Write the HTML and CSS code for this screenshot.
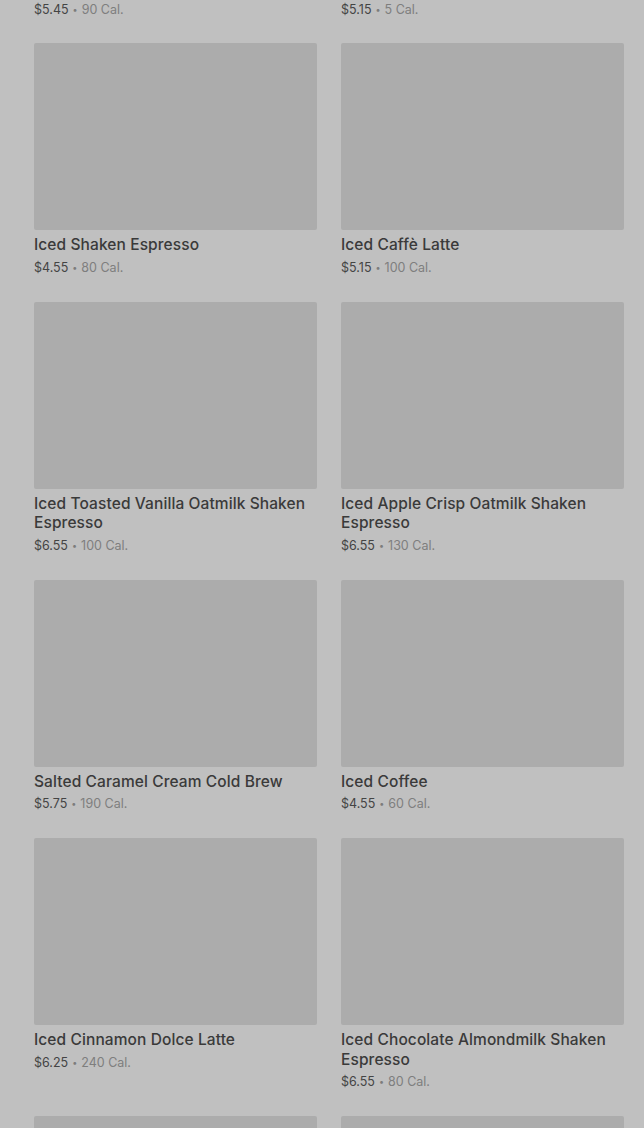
FILE: index.html
```html
<!DOCTYPE html>
<html>
<head>
<meta charset="utf-8">
<link rel="stylesheet" href="styles.css">
</head>
<body>
<main class="menu">
  <div class="grid">
    <div class="card partial"><p class="meta"><span class="price">$5.45</span><span class="dot">•</span><span class="cal">90 Cal.</span></p></div>
    <div class="card partial"><p class="meta"><span class="price">$5.15</span><span class="dot">•</span><span class="cal">5 Cal.</span></p></div>

    <div class="card"><div class="thumb"></div><h3 class="name">Iced Shaken Espresso</h3><p class="meta"><span class="price">$4.55</span><span class="dot">•</span><span class="cal">80 Cal.</span></p></div>
    <div class="card"><div class="thumb"></div><h3 class="name">Iced Caffè Latte</h3><p class="meta"><span class="price">$5.15</span><span class="dot">•</span><span class="cal">100 Cal.</span></p></div>

    <div class="card"><div class="thumb"></div><h3 class="name">Iced Toasted Vanilla Oatmilk Shaken Espresso</h3><p class="meta"><span class="price">$6.55</span><span class="dot">•</span><span class="cal">100 Cal.</span></p></div>
    <div class="card"><div class="thumb"></div><h3 class="name">Iced Apple Crisp Oatmilk Shaken Espresso</h3><p class="meta"><span class="price">$6.55</span><span class="dot">•</span><span class="cal">130 Cal.</span></p></div>

    <div class="card"><div class="thumb"></div><h3 class="name">Salted Caramel Cream Cold Brew</h3><p class="meta"><span class="price">$5.75</span><span class="dot">•</span><span class="cal">190 Cal.</span></p></div>
    <div class="card"><div class="thumb"></div><h3 class="name">Iced Coffee</h3><p class="meta"><span class="price">$4.55</span><span class="dot">•</span><span class="cal">60 Cal.</span></p></div>

    <div class="card"><div class="thumb"></div><h3 class="name">Iced Cinnamon Dolce Latte</h3><p class="meta"><span class="price">$6.25</span><span class="dot">•</span><span class="cal">240 Cal.</span></p></div>
    <div class="card"><div class="thumb"></div><h3 class="name">Iced Chocolate Almondmilk Shaken Espresso</h3><p class="meta"><span class="price">$6.55</span><span class="dot">•</span><span class="cal">80 Cal.</span></p></div>

    <div class="card"><div class="thumb"></div></div>
    <div class="card"><div class="thumb"></div></div>
  </div>
</main>
</body>
</html>
```
FILE: styles.css
```css
html, body {
  margin: 0;
  padding: 0;
  background: #c0c0c0;
  height: 1128px;
  overflow: hidden;
}
body {
  font-family: Inter, "Noto Sans", "Liberation Sans", sans-serif;
  color: #3c3c3c;
}
.menu {
  padding: 0 20px 0 34px;
}
.grid {
  display: grid;
  grid-template-columns: 283px 283px;
  column-gap: 24px;
  row-gap: 24px;
}
.card {
  display: flex;
  flex-direction: column;
}
.thumb {
  height: 187px;
  background: #acacac;
  border-radius: 2px;
}
.name {
  margin: 5px 0 0;
  font-size: 15.5px;
  line-height: 19.5px;
  font-weight: 500;
  color: #3a3a3a;
  letter-spacing: 0.1px;
}
.meta {
  margin: 3px 0 0;
  font-size: 12.5px;
  line-height: 20px;
  display: flex;
  align-items: center;
}
.partial .meta {
  margin: 0;
  line-height: 19px;
}
.price {
  color: #444;
}
.dot {
  color: #7c7c7c;
  font-size: 9px;
  margin: 0 4px;
}
.cal {
  color: #7e7e7e;
}
```
